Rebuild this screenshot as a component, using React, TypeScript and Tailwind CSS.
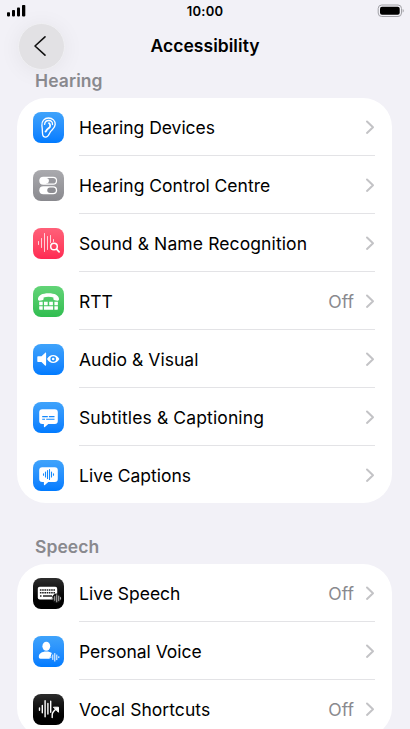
import React from 'react';

const EarIcon = () => (
  <g fill="none" stroke="#fff" strokeWidth="1.3" strokeLinecap="round" strokeLinejoin="round">
    <path d="M8.900 13.600C8.400 9 11.500 6 15.500 6c4.100 0 6.900 2.800 6.700 6.400-.2 3.500-3 4.900-4.700 7.300-1.300 1.900-2 5.500-4.900 5.500-2.200 0-3-1.700-3.100-3.900-.1-2.800-.2-5.300-.6-7.700z" />
    <path d="M11.600 12.400c.3-2.400 2-3.900 4.200-3.900 2.500 0 3.900 1.800 3.700 4" />
    <path d="M16 11.200c1.600 1.500 1.500 3.500-.1 4.800-1.200 1-2.400 1.300-2.500 2.700" strokeWidth="1.800" />
    <circle cx="12.600" cy="19.600" r="1" fill="#fff" stroke="none" />
  </g>
);

const TogglesIcon = () => (
  <g>
    <rect x="6.300" y="6.800" width="17.800" height="8" rx="4" fill="#fff" />
    <rect x="12" y="8" width="10.900" height="5.600" rx="2.800" fill="#98989d" />
    <rect x="7.500" y="8" width="8.400" height="5.600" rx="2.800" fill="#fff" />
    <rect x="6.300" y="16.200" width="17.800" height="8" rx="4" fill="#fff" />
    <rect x="14.300" y="17.500" width="8.500" height="5.400" rx="2.700" fill="#8e8e93" />
  </g>
);

const SoundIcon = () => (
  <g fill="none" stroke="#fff" strokeLinecap="round">
    <path d="M5.500 13.500v3M8.500 10.500v9M11.500 5.500v18M14.500 8.500v13M17.500 7.500v7M20.500 11.500v2" strokeWidth="1" opacity=".75" />
    <circle cx="21" cy="18.500" r="3.300" strokeWidth="1.500" />
    <path d="M23.500 21.200l2.600 2.600" strokeWidth="1.700" />
  </g>
);

const TtyIcon = () => (
  <g fill="#fff">
    <path d="M5 13.300C4.700 9.300 9.500 7.200 15.500 7.200S26.300 9.300 26 13.300c-.1 1.100-.6 1.500-1.600 1.400l-2.700-.4c-1-.2-1.300-.7-1.300-1.700v-1.200c-3-.8-6.800-.8-9.800 0v1.200c0 1-.3 1.500-1.300 1.700l-2.700.4c-1 .1-1.500-.3-1.600-1.400z" />
    <path d="M6.200 15.800h3.500v3.400H6.200zM11 15.800h3.700v3.400H11zM16.200 15.800h3.700v3.400h-3.700zM21.400 15.800h3.500v3.400h-3.500zM6.200 20.300h3.500v3.500H6.900a.7.7 0 0 1-.7-.7zM10.900 20.300h9.200v3.500h-9.200zM21.400 20.300h3.500V23a.7.700 0 0 1-.7.800h-2.800z" />
  </g>
);

const SpeakerEyeIcon = () => (
  <g fill="#fff">
    <path d="M5.300 12.200h3.200l3.500-3.300c.6-.5 1.100-.3 1.100.4v11.600c0 .8-.5 1-1.100.5l-3.500-3.300H5.300c-.7 0-1-.4-1-1v-3.900c0-.6.3-1 1-1z" />
    <path d="M14 15c1.500-2.700 3.700-4 6.200-4s4.700 1.300 6.200 4c-1.500 2.700-3.700 4-6.200 4s-4.700-1.300-6.200-4z" />
    <circle cx="20.200" cy="15" r="2.800" fill="#1f90fd" />
    <circle cx="20.200" cy="15" r="1.300" />
  </g>
);

const bubble = 'M9.200 7.200h12.600a3 3 0 0 1 3 3V19a3 3 0 0 1-3 3h-6.500l-3.400 2.900c-.6.5-1 .2-1-.4V22H9.200a3 3 0 0 1-3-3v-8.800a3 3 0 0 1 3-3z';

const SubtitlesIcon = () => (
  <g>
    <path d={bubble} fill="#fff" />
    <path d="M9.200 14.600h5.600M15.900 14.600h5.600M9.200 17.300h2.800M13.200 17.300h8.300" stroke="#1389fd" strokeWidth="1.100" />
  </g>
);

const CaptionsIcon = () => (
  <g>
    <path d={bubble} fill="#fff" />
    <path d="M10.500 13.700v1.500M12.500 12v5M14.500 10.500v8M16.500 9.500v10M18.500 12v5M20.500 13.700v1.500" stroke="#1389fd" strokeWidth="1.100" strokeLinecap="round" />
  </g>
);

const KeyboardIcon = () => (
  <g>
    <rect x="4.800" y="8.800" width="19.400" height="12.600" rx="1.900" fill="#fff" />
    <path d="M6.900 11.900h15.300M6.900 14.800h15.300" stroke="#222" strokeWidth="1.500" strokeDasharray="1.600 .65" />
    <path d="M7 18h1.500M10 18h9M20.500 18H22" stroke="#222" strokeWidth="1.400" />
    <circle cx="23.700" cy="20.300" r="4.800" fill="#161616" />
    <path d="M19.700 19.700v1.300M21.700 18.500v3.800M23.700 16.800v7M25.700 18v4.600M27.500 19.600v1.500" stroke="#aaa" strokeWidth="1.100" strokeLinecap="round" />
  </g>
);

const PersonIcon = () => (
  <g fill="#fff">
    <ellipse cx="13.300" cy="10.200" rx="3.900" ry="4.500" />
    <path d="M5.800 20.700c0-3.200 3-5.300 7.500-5.300 2.500 0 4.300.6 5.600 1.700-.6.700-.8 1.700-1 3-.8.600-1.200 1.400-1.200 2.600H7.400c-1 0-1.600-.8-1.600-2z" />
    <path d="M17.800 20.700v1M19.800 19v4.500M21.800 17.500v7.600M23.800 19v4.700M25.800 20.700v1" stroke="#fff" strokeWidth="1" strokeLinecap="round" />
  </g>
);

const ShortcutsIcon = () => (
  <g fill="none" stroke="#fff" strokeWidth="1.400" strokeLinecap="round" strokeLinejoin="round">
    <path d="M6.500 14v2.300M9.300 11.500v7.200M12.100 6.800v16M14.900 9.500v10.500M17.700 7.200v11M19.200 23.500v-2.700c0-2.500 1.300-4 4.300-6" />
    <path d="M20.800 13.200h4.700v4.700z" fill="#fff" strokeWidth="1" />
  </g>
);

const BLUE = 'from-[#3fa3fb] to-[#007bff]';
const BLACK = 'from-[#2d2d2d] to-[#000000]';

const SECTIONS = [
  {
    title: 'Hearing',
    heading: 'h-[28px]',
    spacing: 'tracking-[0.1px]',
    rows: [
      { label: 'Hearing Devices', icon: <EarIcon />, bg: BLUE, spacing: 'tracking-[-0.02px]' },
      { label: 'Hearing Control Centre', icon: <TogglesIcon />, bg: 'from-[#aaaaae] to-[#89898e]', spacing: 'tracking-normal' },
      { label: 'Sound & Name Recognition', icon: <SoundIcon />, bg: 'from-[#ff6079] to-[#ff2853]', spacing: 'tracking-[0.11px]' },
      { label: 'RTT', icon: <TtyIcon />, bg: 'from-[#62d477] to-[#2fbd50]', value: 'Off', spacing: 'tracking-normal' },
      { label: 'Audio & Visual', icon: <SpeakerEyeIcon />, bg: BLUE, spacing: 'tracking-[0.04px]' },
      { label: 'Subtitles & Captioning', icon: <SubtitlesIcon />, bg: BLUE, spacing: 'tracking-[0.13px]' },
      { label: 'Live Captions', icon: <CaptionsIcon />, bg: BLUE, spacing: 'tracking-normal' },
    ],
  },
  {
    title: 'Speech',
    heading: 'h-[61px]',
    spacing: 'tracking-[0.05px]',
    rows: [
      { label: 'Live Speech', icon: <KeyboardIcon />, bg: BLACK, value: 'Off', spacing: 'tracking-normal' },
      { label: 'Personal Voice', icon: <PersonIcon />, bg: BLUE, spacing: 'tracking-[-0.03px]' },
      { label: 'Vocal Shortcuts', icon: <ShortcutsIcon />, bg: BLACK, value: 'Off', spacing: 'tracking-[0.05px]' },
    ],
  },
];

export default function App() {
  return (
    <div className="h-[729px] w-[410px] overflow-hidden bg-[#f2f1f7] font-['Inter','Liberation_Sans',sans-serif] text-black">
      {/* Status bar */}
      <div className="flex h-[22px] items-center justify-between pl-[7px] pr-[6px]">
        <svg width="60" height="12" viewBox="0 0 60 12" className="mb-px shrink-0">
          <rect x="0" y="7.200" width="3" height="4.200" rx=".8" />
          <rect x="5" y="5" width="3" height="6.400" rx=".8" />
          <rect x="10" y="2.600" width="3" height="8.800" rx=".8" />
          <rect x="15" y="0" width="3.300" height="11.400" rx=".8" />
        </svg>
        <span className="-ml-px pt-[2px] text-[13px] font-semibold tracking-[0.2px]">10:00</span>
        <svg width="60" height="14" viewBox="0 0 60 14" className="mb-px shrink-0">
          <rect x="34.200" y="1" width="23.300" height="11.500" rx="3.500" fill="none" stroke="#a2a2a7" />
          <rect x="36" y="2.800" width="19.700" height="7.900" rx="2" />
          <path d="M58.700 5v3.600c.7-.3 1-1 1-1.800s-.3-1.500-1-1.800z" fill="#9b9ba0" />
        </svg>
      </div>

      {/* Navigation bar */}
      <div className="flex h-[48px] items-center px-[18px]">
        <button className="flex size-[47px] shrink-0 items-center justify-center rounded-full border border-[#f0f0f3] bg-[#e2e1e4] shadow-[0_2px_22px_rgba(0,0,0,0.06)]">
          <svg width="14" height="22" viewBox="0 0 14 22" fill="none" stroke="#111" strokeWidth="1.600" strokeLinecap="round" strokeLinejoin="round" className="-ml-[3px]">
            <path d="M12 1.800L2 11l10 9.200" />
          </svg>
        </button>
        <h1 className="flex-1 pr-[47px] text-center text-[17.500px] font-semibold tracking-[0.05px]">Accessibility</h1>
      </div>

      {SECTIONS.map((section) => (
        <section key={section.title}>
          <div className={`flex items-end pb-[5px] pl-[35px] ${section.heading}`}>
            <h2 className={`text-[17.500px] font-semibold leading-[24px] text-[#89898e] ${section.spacing}`}>{section.title}</h2>
          </div>
          <div className="ml-[17px] mr-[18px] overflow-hidden rounded-[29px] bg-white">
            {section.rows.map((row, i) => (
              <div key={row.label} className="flex h-[58px] items-start pl-4 last:h-[57px]">
                <svg width="31" height="31" viewBox="0 0 31 31" className={`mt-[14px] shrink-0 rounded-[8px] bg-linear-to-b ${row.bg}`}>
                  {row.icon}
                </svg>
                <div className={`ml-[15px] mr-[17px] flex h-full flex-1 items-center ${i < section.rows.length - 1 ? 'border-b border-[#e3e3e6]' : ''}`}>
                  <span className={`pt-[3px] text-[17.500px] ${row.spacing}`}>{row.label}</span>
                  <span className="ml-auto pt-[3px] text-[17.500px] tracking-normal text-[#89898e]">{row.value}</span>
                  <svg width="10" height="16" viewBox="0 0 10 16" fill="none" stroke="#c3c3c6" strokeWidth="2" strokeLinecap="round" strokeLinejoin="round" className="ml-[11px] mt-px">
                    <path d="M2 2.500L8 8.200 2 13.900" />
                  </svg>
                </div>
              </div>
            ))}
          </div>
        </section>
      ))}
    </div>
  );
}
